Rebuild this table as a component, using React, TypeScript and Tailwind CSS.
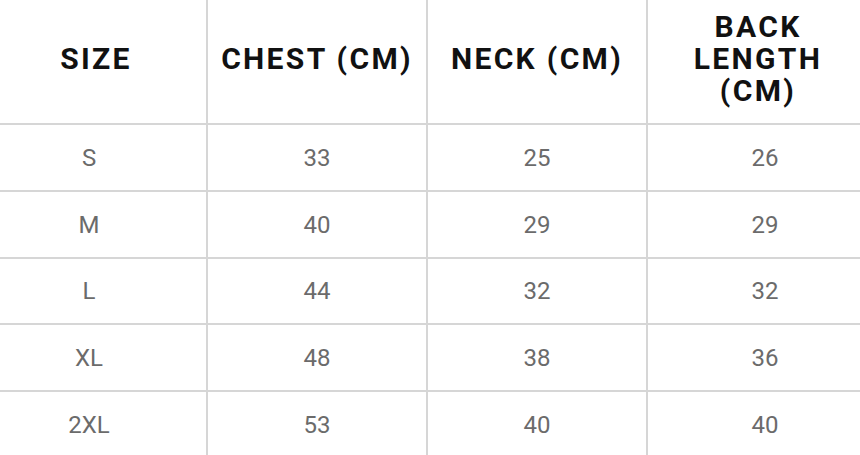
import React from 'react';

const headers = [
  { label: 'SIZE', className: 'pr-[14px]' },
  { label: 'CHEST (CM)', className: '' },
  { label: 'NECK (CM)', className: '' },
  { label: 'BACK LENGTH (CM)', className: 'inline-block max-w-[150px] ml-[8px]' },
];

const rows = [
  ['S', '33', '25', '26'],
  ['M', '40', '29', '29'],
  ['L', '44', '32', '32'],
  ['XL', '48', '38', '36'],
  ['2XL', '53', '40', '40'],
];

const rowHeights = ['h-[67px]', 'h-[67px]', 'h-[66px]', 'h-[67px]', 'h-[67px]'];

// body cells nudged per column to match the original's centering
const bodyPad = ['pr-[28px]', '', '', 'pl-[22px]'];

export default function App() {
  return (
    <div className="w-[860px] h-[455px] overflow-hidden bg-white font-['Roboto',sans-serif]">
      <div className="grid grid-cols-[208px_220px_220px_212px]">
        {headers.map((h, i) => (
          <div
            key={h.label}
            className={`h-[125px] flex items-center justify-center text-center border-b-2 border-[#d6d6d6] pb-[6px] ${i < 3 ? 'border-r-2' : ''}`}
          >
            <span
              className={`text-[30px] leading-[32px] font-bold tracking-[0.078em] text-[#111] ${h.className}`}
            >
              {h.label}
            </span>
          </div>
        ))}
        {rows.map((row, r) =>
          row.map((cell, c) => (
            <div
              key={`${r}-${c}`}
              className={`${rowHeights[r]} flex items-center justify-center border-b-2 border-[#d6d6d6] ${c < 3 ? 'border-r-2' : ''}`}
            >
              <span className={`text-[24px] text-[#6b6b6b] ${bodyPad[c]}`}>{cell}</span>
            </div>
          ))
        )}
      </div>
    </div>
  );
}
